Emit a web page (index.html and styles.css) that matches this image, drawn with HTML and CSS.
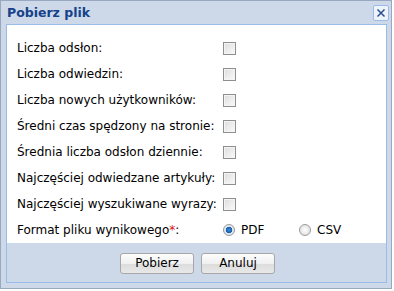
FILE: index.html
```html
<!DOCTYPE html>
<html>
<head>
<meta charset="utf-8">
<link rel="stylesheet" href="styles.css">
</head>
<body>
<div class="win">
  <div class="head">
    <span class="title">Pobierz plik</span>
    <span class="close"><svg width="14" height="14" viewBox="0 0 14 14"><path d="M3.5 3.5 L10.5 10.5 M10.5 3.5 L3.5 10.5" stroke="#2c4d8c" stroke-width="1.5" fill="none"/></svg></span>
  </div>
  <div class="body">
    <div class="form">
      <div class="row"><span class="lbl">Liczba odsłon:</span><span class="cb"></span></div>
      <div class="row"><span class="lbl">Liczba odwiedzin:</span><span class="cb"></span></div>
      <div class="row"><span class="lbl">Liczba nowych użytkowników:</span><span class="cb"></span></div>
      <div class="row"><span class="lbl">Średni czas spędzony na stronie:</span><span class="cb"></span></div>
      <div class="row"><span class="lbl">Średnia liczba odsłon dziennie:</span><span class="cb"></span></div>
      <div class="row"><span class="lbl">Najczęściej odwiedzane artykuły:</span><span class="cb"></span></div>
      <div class="row"><span class="lbl">Najczęściej wyszukiwane wyrazy:</span><span class="cb"></span></div>
      <div class="row"><span class="lbl">Format pliku wynikowego<span class="req">*</span>:</span>
        <span class="opt"><span class="rb on"></span>PDF</span>
        <span class="opt"><span class="rb"></span>CSV</span>
      </div>
    </div>
    <div class="foot">
      <button class="btn">Pobierz</button>
      <button class="btn">Anuluj</button>
    </div>
  </div>
</div>
</body>
</html>
```
FILE: styles.css
```css
html, body { margin: 0; padding: 0; background: #fff; }
body { font-family: "DejaVu Sans", sans-serif; font-size: 12px; color: #000; }
.win {
  width: 392px; height: 289px; box-sizing: border-box;
  border: 1px solid #97a8c0; background: #cdd9e8;
  padding: 0 4px 5px 5px;
  display: flex; flex-direction: column;
}
.head { height: 23px; display: flex; align-items: center; justify-content: space-between; padding: 0 0 0 1px; }
.title { color: #15428b; font-weight: bold; font-size: 12.5px; }
.close {
  width: 14px; height: 14px; border: 1px solid #99bbe8; border-radius: 2px;
  background: #eef3fa; display: flex; margin-right: -2px;
}
.body { flex: 1; border: 1px solid #99bbe8; display: flex; flex-direction: column; }
.form { background: #fff; padding: 10px 0 0 10px; height: 208px; }
.row { height: 26px; display: flex; align-items: center; white-space: nowrap; }
.lbl { width: 206px; flex: none; }
.req { color: #e01010; }
.cb {
  width: 11px; height: 11px; border: 1px solid #8f8f8f;
  background: linear-gradient(135deg, #dcdcdc, #fbfbfb);
  box-shadow: inset 0 0 0 1px #f4f4f4;
}
.opt { display: flex; align-items: center; width: 76px; }
.rb {
  width: 10px; height: 10px; border-radius: 50%; border: 1px solid #9a9a9a;
  background: radial-gradient(circle at 50% 50%, #fff, #d8d8d8);
  margin-right: 6px;
}
.rb.on { background: radial-gradient(circle at 50% 50%, #2f8ee0 0, #1a5ea8 3px, #e8eef5 3.6px, #cfd6de 100%); }
.foot { flex: 1; display: flex; justify-content: center; align-items: center; gap: 7px; padding: 1px 0 0 2px; }
.btn {
  width: 74px; height: 21px; font-family: inherit; font-size: 12px; color: #000;
  border: 1px solid #a7a7a7; border-radius: 3px;
  background: linear-gradient(#fdfdfd 0, #f0f0f0 50%, #dcdcdc 51%, #e8e8e8 100%);
  padding: 0;
}
```
